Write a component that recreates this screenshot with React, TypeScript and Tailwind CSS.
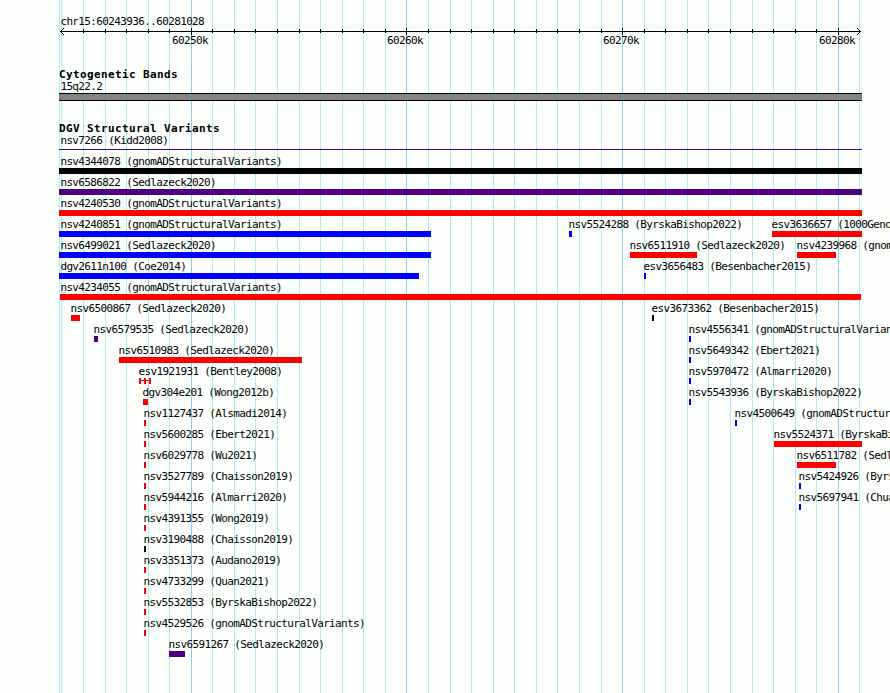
type Mark = {
  name: string;
  start: number;
  width: number;
  color: string;
  labelAt?: number;
  segmented?: boolean;
};

const BLACK = 'bg-black';
const PURPLE = 'bg-[#4b0082]';
const RED = 'bg-[#ff0000]';
const BLUE = 'bg-[#0000ff]';

const GRID_LINES = [
  59, 61, 83, 105, 126, 148, 169, 191, 212, 234, 255, 277, 299, 320, 342, 363, 385, 406, 428, 450, 471,
  493, 514, 536, 557, 579, 601, 622, 644, 665, 687, 708, 730, 752, 773, 795, 816, 838, 859,
];

const MAJOR: Record<number, string> = {
  191: '60250k',
  406: '60260k',
  622: '60270k',
  838: '60280k',
};

// One entry per bump row, positions in px on the 37kb window
const ROWS: Mark[][] = [
  [{ name: 'nsv4344078 (gnomADStructuralVariants)', start: 59, width: 803, color: BLACK, labelAt: 60.4 }],
  [{ name: 'nsv6586822 (Sedlazeck2020)', start: 59, width: 803, color: PURPLE, labelAt: 60.4 }],
  [{ name: 'nsv4240530 (gnomADStructuralVariants)', start: 59, width: 803, color: RED, labelAt: 60.4 }],
  [
    { name: 'nsv4240851 (gnomADStructuralVariants)', start: 59, width: 372, color: BLUE, labelAt: 60.4 },
    { name: 'nsv5524288 (ByrskaBishop2022)', start: 569, width: 3, color: BLUE },
    { name: 'esv3636657 (1000Geno', start: 772, width: 90, color: RED },
  ],
  [
    { name: 'nsv6499021 (Sedlazeck2020)', start: 59, width: 372, color: BLUE, labelAt: 60.4 },
    { name: 'nsv6511910 (Sedlazeck2020)', start: 630, width: 67, color: RED },
    { name: 'nsv4239968 (gnom', start: 797, width: 39, color: RED },
  ],
  [
    { name: 'dgv2611n100 (Coe2014)', start: 59, width: 360, color: BLUE, labelAt: 60.4 },
    { name: 'esv3656483 (Besenbacher2015)', start: 644, width: 2, color: BLUE },
  ],
  [{ name: 'nsv4234055 (gnomADStructuralVariants)', start: 60, width: 801, color: RED, labelAt: 60.4 }],
  [
    { name: 'nsv6500867 (Sedlazeck2020)', start: 71, width: 9, color: RED },
    { name: 'esv3673362 (Besenbacher2015)', start: 652, width: 2, color: BLACK },
  ],
  [
    { name: 'nsv6579535 (Sedlazeck2020)', start: 94, width: 4, color: PURPLE },
    { name: 'nsv4556341 (gnomADStructuralVarian', start: 689, width: 2, color: BLUE },
  ],
  [
    { name: 'nsv6510983 (Sedlazeck2020)', start: 119, width: 183, color: RED },
    { name: 'nsv5649342 (Ebert2021)', start: 689, width: 2, color: BLUE },
  ],
  [
    { name: 'esv1921931 (Bentley2008)', start: 139, width: 12, color: RED, segmented: true },
    { name: 'nsv5970472 (Almarri2020)', start: 689, width: 2, color: BLUE },
  ],
  [
    { name: 'dgv304e201 (Wong2012b)', start: 143, width: 5, color: RED },
    { name: 'nsv5543936 (ByrskaBishop2022)', start: 689, width: 2, color: BLUE },
  ],
  [
    { name: 'nsv1127437 (Alsmadi2014)', start: 144, width: 2, color: RED },
    { name: 'nsv4500649 (gnomADStructur', start: 735, width: 2, color: BLUE },
  ],
  [
    { name: 'nsv5600285 (Ebert2021)', start: 144, width: 2, color: RED },
    { name: 'nsv5524371 (ByrskaBi', start: 774, width: 88, color: RED },
  ],
  [
    { name: 'nsv6029778 (Wu2021)', start: 144, width: 2, color: RED },
    { name: 'nsv6511782 (Sedl', start: 797, width: 39, color: RED },
  ],
  [
    { name: 'nsv3527789 (Chaisson2019)', start: 144, width: 2, color: RED },
    { name: 'nsv5424926 (Byrs', start: 799, width: 2, color: BLUE },
  ],
  [
    { name: 'nsv5944216 (Almarri2020)', start: 144, width: 2, color: RED },
    { name: 'nsv5697941 (Chua', start: 799, width: 2, color: BLUE },
  ],
  [{ name: 'nsv4391355 (Wong2019)', start: 144, width: 2, color: RED }],
  [{ name: 'nsv3190488 (Chaisson2019)', start: 144, width: 2, color: BLACK }],
  [{ name: 'nsv3351373 (Audano2019)', start: 144, width: 2, color: RED }],
  [{ name: 'nsv4733299 (Quan2021)', start: 144, width: 2, color: RED }],
  [{ name: 'nsv5532853 (ByrskaBishop2022)', start: 144, width: 2, color: RED }],
  [{ name: 'nsv4529526 (gnomADStructuralVariants)', start: 144, width: 2, color: RED }],
  [{ name: 'nsv6591267 (Sedlazeck2020)', start: 169, width: 16, color: PURPLE }],
];

export default function App() {
  return (
    <div className="relative h-[693px] w-[890px] overflow-hidden bg-[#fcfffc] font-['DejaVu_Sans_Mono',monospace] text-[11px] leading-[12px] tracking-[-0.635px] text-black">
      <GridLines />
      <div className="relative flex flex-col">
        <div className="h-[28px] pt-[16px] pl-[60.4px]">chr15:60243936..60281028</div>
        <Ruler />
        <div className="grid h-[34px]">
          {Object.entries(MAJOR).map(([x, label]) => (
            <span key={x} className="col-start-1 row-start-1" style={{ marginLeft: Number(x) - 19 }}>
              {label}
            </span>
          ))}
        </div>

        <TrackTitle>Cytogenetic Bands</TrackTitle>
        <div className="h-[12px] pl-[60.4px]">15q22.2</div>
        <div className="ml-[59px] h-[8px] w-[803px] border-y border-black bg-[#848284]" />

        <div className="h-[22px]" />
        <TrackTitle>DGV Structural Variants</TrackTitle>
        <div className="h-[14px] pl-[60.4px]">nsv7266 (Kidd2008)</div>
        <div className="ml-[59px] h-px w-[803px] bg-[#4b0082]" />
        <div className="h-[3px]" />

        {ROWS.map((row, i) => (
          <div key={i} className="grid h-[21px] grid-cols-[890px]">
            {row.map(mark => (
              <Variant key={mark.name} mark={mark} />
            ))}
          </div>
        ))}
      </div>
    </div>
  );
}

function GridLines() {
  return (
    <div className="absolute inset-0">
      {GRID_LINES.map(x => (
        <div
          key={x}
          className={`absolute inset-y-0 w-px ${MAJOR[x] ? 'bg-[#87ceeb]' : 'bg-[#afeeee]'}`}
          style={{ left: x }}
        />
      ))}
    </div>
  );
}

function Ruler() {
  return (
    <svg width="890" height="7" viewBox="0 0 890 7" className="block" shapeRendering="crispEdges">
      <rect x="60" y="3" width="801" height="1" />
      {GRID_LINES.filter(x => x > 61 && x < 859).map(x => (
        <rect key={x} x={x} y={MAJOR[x] ? 0 : 1} width="1" height={MAJOR[x] ? 7 : 4} />
      ))}
      {[0, 1, 2, 3].map(n => (
        <g key={n}>
          <rect x={60 + n} y={3 - n} width="1" height="1" />
          <rect x={60 + n} y={3 + n} width="1" height="1" />
          <rect x={860 - n} y={3 - n} width="1" height="1" />
          <rect x={860 - n} y={3 + n} width="1" height="1" />
        </g>
      ))}
    </svg>
  );
}

function TrackTitle({ children }: { children: React.ReactNode }) {
  return <div className="h-[12px] pl-[59px] font-bold tracking-[0.378px]">{children}</div>;
}

function Variant({ mark }: { mark: Mark }) {
  const { name, start, width, color, labelAt = start - 0.5, segmented } = mark;
  return (
    <div className="col-start-1 row-start-1 flex flex-col">
      <div className="h-[15px] pt-[3px] whitespace-nowrap" style={{ marginLeft: labelAt }}>
        {name}
      </div>
      {segmented ? (
        <div className="flex h-[6px] items-stretch" style={{ marginLeft: start, width }}>
          <div className={`w-[2px] ${color}`} />
          <div className={`mt-[2px] h-px w-[3px] ${color}`} />
          <div className={`w-[2px] ${color}`} />
          <div className={`mt-[2px] h-px w-[3px] ${color}`} />
          <div className={`w-[2px] ${color}`} />
        </div>
      ) : (
        <div className={`h-[6px] ${color}`} style={{ marginLeft: start, width }} />
      )}
    </div>
  );
}
